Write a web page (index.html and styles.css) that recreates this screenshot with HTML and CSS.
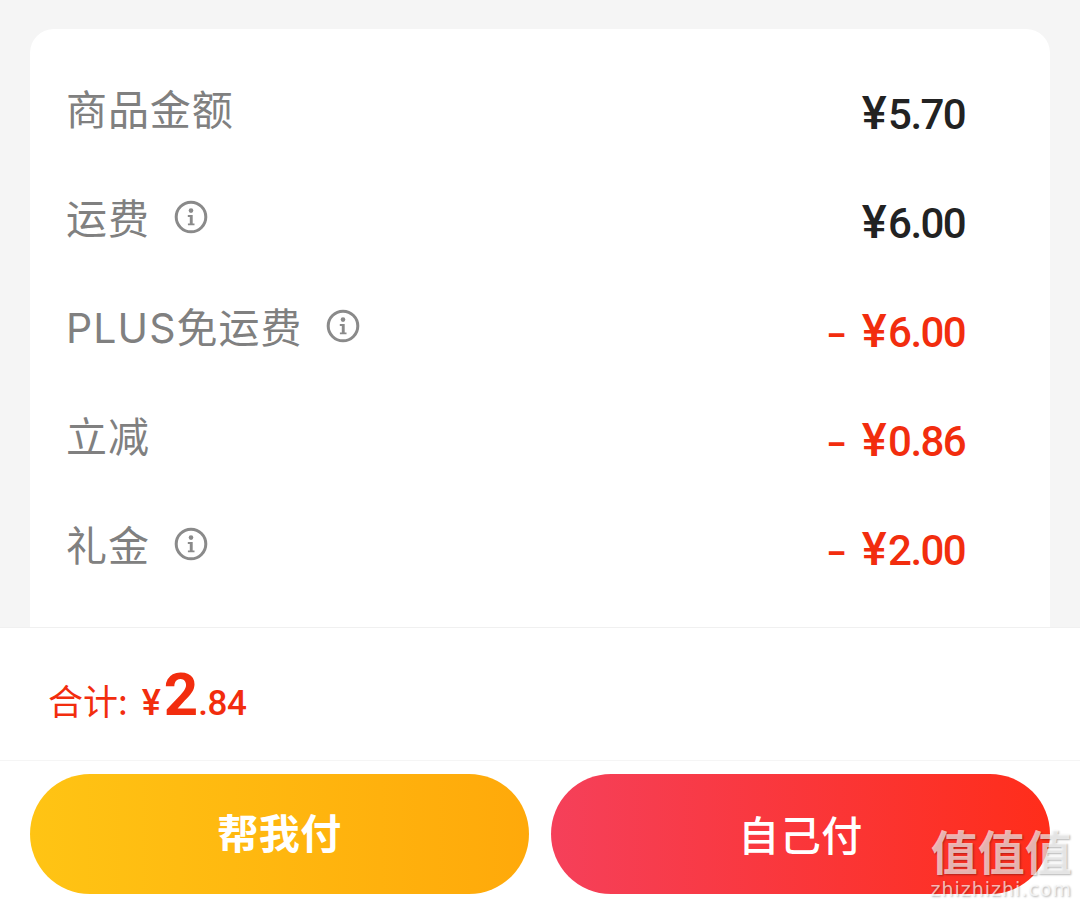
FILE: index.html
```html
<!DOCTYPE html>
<html lang="zh-CN">
<head>
    <meta charset="UTF-8">
    <meta name="viewport" content="width=device-width, initial-scale=1.0">
    <title>费用明细</title>
    <link rel="stylesheet" href="styles.css">
</head>
<body>
    <div class="page">
        <div class="card">
            <div class="row">
                <div class="label"><span>商品金额</span></div>
                <div class="value"><span class="yen">¥</span>5.70</div>
            </div>
            <div class="row">
                <div class="label"><span>运费</span>
                    <svg class="info" viewBox="0 0 34 34"><circle cx="17" cy="17" r="14.8" fill="none" stroke="#8a8a8a" stroke-width="3"/><circle cx="17" cy="10.6" r="2.3" fill="#8a8a8a"/><path d="M13.8 15h4.9v8.4h1.8v1.9h-6.6v-1.9h1.9v-6.5h-2z" fill="#8a8a8a"/></svg>
                </div>
                <div class="value"><span class="yen">¥</span>6.00</div>
            </div>
            <div class="row">
                <div class="label"><span><span class="latin">PLUS</span>免运费</span>
                    <svg class="info" viewBox="0 0 34 34"><circle cx="17" cy="17" r="14.8" fill="none" stroke="#8a8a8a" stroke-width="3"/><circle cx="17" cy="10.6" r="2.3" fill="#8a8a8a"/><path d="M13.8 15h4.9v8.4h1.8v1.9h-6.6v-1.9h1.9v-6.5h-2z" fill="#8a8a8a"/></svg>
                </div>
                <div class="value red"><span class="minus">–</span><span class="yen">¥</span>6.00</div>
            </div>
            <div class="row">
                <div class="label"><span>立减</span></div>
                <div class="value red"><span class="minus">–</span><span class="yen">¥</span>0.86</div>
            </div>
            <div class="row">
                <div class="label"><span>礼金</span>
                    <svg class="info" viewBox="0 0 34 34"><circle cx="17" cy="17" r="14.8" fill="none" stroke="#8a8a8a" stroke-width="3"/><circle cx="17" cy="10.6" r="2.3" fill="#8a8a8a"/><path d="M13.8 15h4.9v8.4h1.8v1.9h-6.6v-1.9h1.9v-6.5h-2z" fill="#8a8a8a"/></svg>
                </div>
                <div class="value red"><span class="minus">–</span><span class="yen">¥</span>2.00</div>
            </div>
        </div>

        <div class="footer">
            <div class="total">
                <span class="total-label">合计:</span>
                <span class="total-yen">¥</span><span class="total-big">2</span><span class="total-small">.84</span>
            </div>
            <div class="actions">
                <div class="btn btn-yellow">帮我付</div>
                <div class="btn btn-red">自己付</div>
            </div>
        </div>
    </div>

    <div class="watermark">
        <div class="wm-logo">值值值</div>
        <div class="wm-url">zhizhizhi.com</div>
    </div>
</body>
</html>
```

FILE: styles.css
```css
* {
    box-sizing: border-box;
}

html, body {
    margin: 0;
    height: 906px;
    overflow: hidden;
}

body {
    background-color: #f5f5f5;
    font-family: "Noto Sans CJK SC", "Noto Sans", sans-serif;
}

.page {
    height: 906px;
    display: flex;
    flex-direction: column;
    padding-top: 29px;
}

.card {
    flex: 1;
    margin: 0 30px;
    padding: 27px 85px 0 36px;
    background-color: white;
    border-radius: 24px 24px 0 0;
    overflow: hidden;
}

.row {
    height: 109px;
    display: flex;
    justify-content: space-between;
}

.label {
    display: flex;
    align-items: center;
    height: 109px;
    padding-bottom: 8px;
    font-size: 41px;
    letter-spacing: 0.9px;
    font-family: Inter, "Noto Sans CJK SC", sans-serif;
    color: #808080;
}

.latin {
    letter-spacing: 1.1px;
}

.info {
    width: 34px;
    height: 34px;
    margin-left: 24px;
    margin-top: 2px;
}

.value {
    height: 109px;
    line-height: 114px;
    font-size: 42px;
    letter-spacing: -1.6px;
    font-weight: 500;
    font-family: Roboto, sans-serif;
    color: #222;
    display: flex;
    align-items: baseline;
}

.yen {
    font-size: 47px;
    margin-right: 3px;
}

.red {
    color: #f22d0e;
}

.minus {
    font-size: 30px;
    font-weight: 900;
    margin-right: 18px;
    position: relative;
    top: -2px;
}

.footer {
    background-color: white;
    border-top: 1px solid #f0f0f0;
}

.total {
    height: 133px;
    padding: 31px 0 0 48px;
    border-bottom: 1px solid #f5f5f5;
    color: #f22d0e;
    display: flex;
    align-items: baseline;
    font-family: Roboto, sans-serif;
    font-weight: 500;
}

.total-label {
    font-family: "Noto Sans CJK SC", sans-serif;
    font-weight: 400;
    font-size: 35px;
    margin-right: 14px;
}

.total-yen {
    font-size: 36px;
    margin-right: 3px;
}

.total-big {
    font-size: 60px;
    font-weight: 700;
}

.total-small {
    font-size: 35px;
    letter-spacing: -0.5px;
}

.actions {
    height: 145px;
    padding: 13px 30px 12px;
    display: flex;
    gap: 22px;
}

.btn {
    flex: 1;
    height: 120px;
    border-radius: 60px;
    display: flex;
    align-items: center;
    justify-content: center;
    color: white;
    font-size: 41px;
    font-weight: 500;
    letter-spacing: 0.5px;
}

.btn-yellow {
    background: linear-gradient(90deg, #ffc414, #ffa90a);
    padding-bottom: 6px;
    font-weight: 700;
}

.btn-red {
    background: linear-gradient(90deg, #f5405a, #ff2d1a);
    padding-bottom: 2px;
}

/* sits over the bottom right corner */
.watermark {
    position: absolute;
    right: 8px;
    top: 822px;
    text-align: center;
    color: rgba(255, 255, 255, 0.68);
    text-shadow: 1px 1px 2px rgba(0, 0, 0, 0.3);
}

.wm-logo {
    font-size: 47px;
    line-height: 56px;
    font-weight: 700;
}

.wm-url {
    font-family: "DejaVu Sans", sans-serif;
    font-size: 19px;
    line-height: 22px;
    letter-spacing: 1px;
}
```
